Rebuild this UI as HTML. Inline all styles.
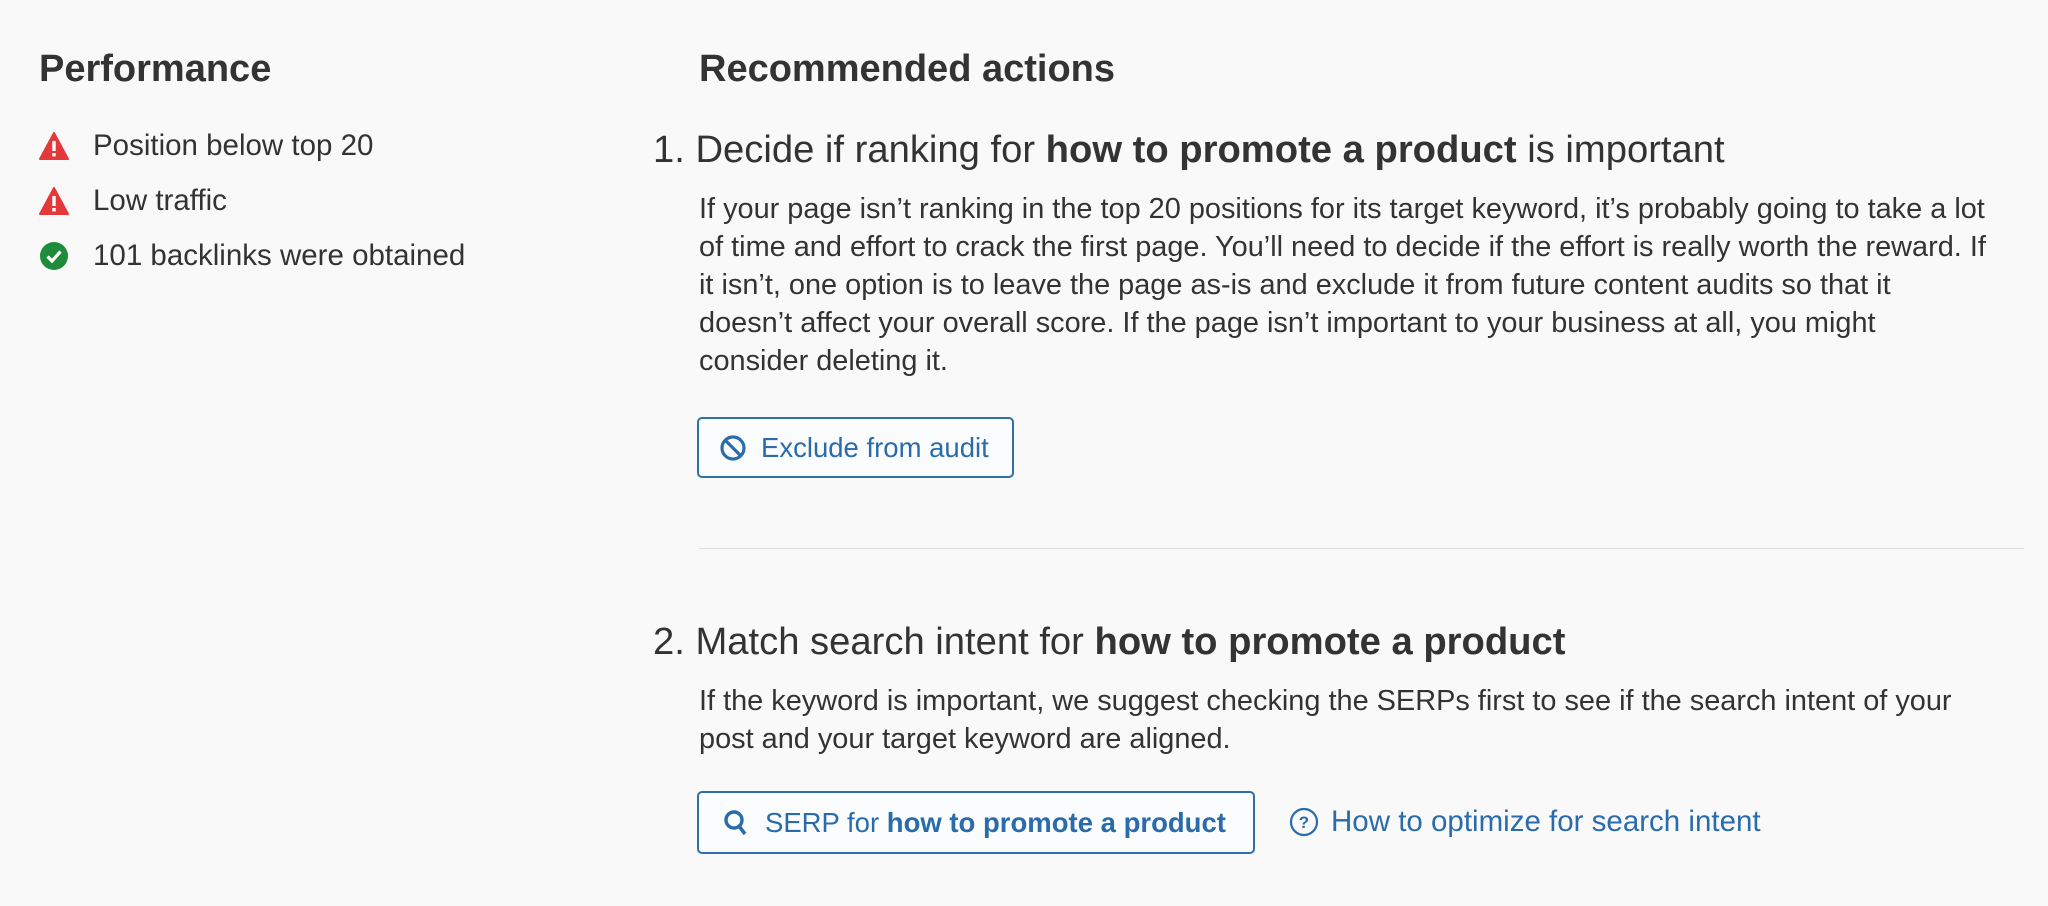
<!DOCTYPE html>
<html><head><meta charset="utf-8"><style>
body{margin:0;width:2048px;height:906px;background:#f9f9f9;font-family:"Liberation Sans",Arial,sans-serif;color:#333;position:relative;overflow:hidden}
.a{position:absolute;white-space:nowrap}
h2{margin:0;font-size:38px;font-weight:bold;color:#333}
.item{font-size:29.5px;display:flex;align-items:center}
.item svg{margin-right:24px}
.h3{font-size:38.2px;color:#333}
.p{font-size:28.9px;line-height:38px}
.btn{border:2px solid #2f6ea6;border-radius:5px;background:#fbfcfd;color:#2a6cab;font-size:27.5px;display:flex;align-items:center;box-sizing:border-box}
.link{color:#2a6cab;font-size:29.5px;display:flex;align-items:center}
</style></head><body>
<h2 class="a" style="left:39px;top:48px">Performance</h2>
<h2 class="a" style="left:699px;top:48px">Recommended actions</h2>

<div class="a item" style="left:39px;top:129px"><svg width="30" height="28" viewBox="0 0 30 28"><path d="M15 1 L29 27 L1 27 Z" fill="#e5383b" stroke="#e5383b" stroke-width="2" stroke-linejoin="round"/><rect x="13.3" y="9" width="3.4" height="10" fill="#fff"/><rect x="13.3" y="21" width="3.4" height="3.4" fill="#fff"/></svg>Position below top 20</div>
<div class="a item" style="left:39px;top:184px"><svg width="30" height="28" viewBox="0 0 30 28"><path d="M15 1 L29 27 L1 27 Z" fill="#e5383b" stroke="#e5383b" stroke-width="2" stroke-linejoin="round"/><rect x="13.3" y="9" width="3.4" height="10" fill="#fff"/><rect x="13.3" y="21" width="3.4" height="3.4" fill="#fff"/></svg>Low traffic</div>
<div class="a item" style="left:39px;top:239px"><svg width="30" height="30" viewBox="0 0 30 30"><circle cx="15" cy="15" r="14" fill="#1e8c3a"/><path d="M8.5 15.5 L13 20 L21.5 10.5" fill="none" stroke="#fff" stroke-width="3.2"/></svg>101 backlinks were obtained</div>

<div class="a h3" style="left:653px;top:128px">1. Decide if ranking for <b>how to promote a product</b> is important</div>
<div class="a p" style="left:699px;top:190px">If your page isn’t ranking in the top 20 positions for its target keyword, it’s probably going to take a lot<br>of time and effort to crack the first page. You’ll need to decide if the effort is really worth the reward. If<br>it isn’t, one option is to leave the page as-is and exclude it from future content audits so that it<br>doesn’t affect your overall score. If the page isn’t important to your business at all, you might<br>consider deleting it.</div>
<div class="a btn" style="left:697px;top:417px;width:317px;height:61px;padding-left:20px"><svg width="28" height="28" viewBox="0 0 28 28" style="margin-right:14px"><circle cx="14" cy="14" r="11" fill="none" stroke="#2a6cab" stroke-width="3.2"/><path d="M6.5 6.5 L21.5 21.5" stroke="#2a6cab" stroke-width="3.2"/></svg>Exclude from audit</div>

<div class="a" style="left:699px;top:548px;width:1325px;height:1px;background:#dedede"></div>

<div class="a h3" style="left:653px;top:620px">2. Match search intent for <b>how to promote a product</b></div>
<div class="a p" style="left:699px;top:682px">If the keyword is important, we suggest checking the SERPs first to see if the search intent of your<br>post and your target keyword are aligned.</div>
<div class="a btn" style="left:697px;top:791px;width:558px;height:63px;padding-left:24px"><svg width="26" height="28" viewBox="0 0 26 28" style="margin-right:16px"><circle cx="11" cy="11" r="8" fill="none" stroke="#2a6cab" stroke-width="3.4"/><path d="M16 17 L22 25" stroke="#2a6cab" stroke-width="3.6"/></svg>SERP for&nbsp;<b>how to promote a product</b></div>
<div class="a link" style="left:1289px;top:805px"><svg width="30" height="30" viewBox="0 0 30 30" style="margin-right:12px"><circle cx="15" cy="15" r="13" fill="none" stroke="#2a6cab" stroke-width="2.2"/><text x="15" y="21" text-anchor="middle" font-family="Liberation Sans" font-size="17" font-weight="bold" fill="#2a6cab">?</text></svg>How to optimize for search intent</div>
</body></html>
